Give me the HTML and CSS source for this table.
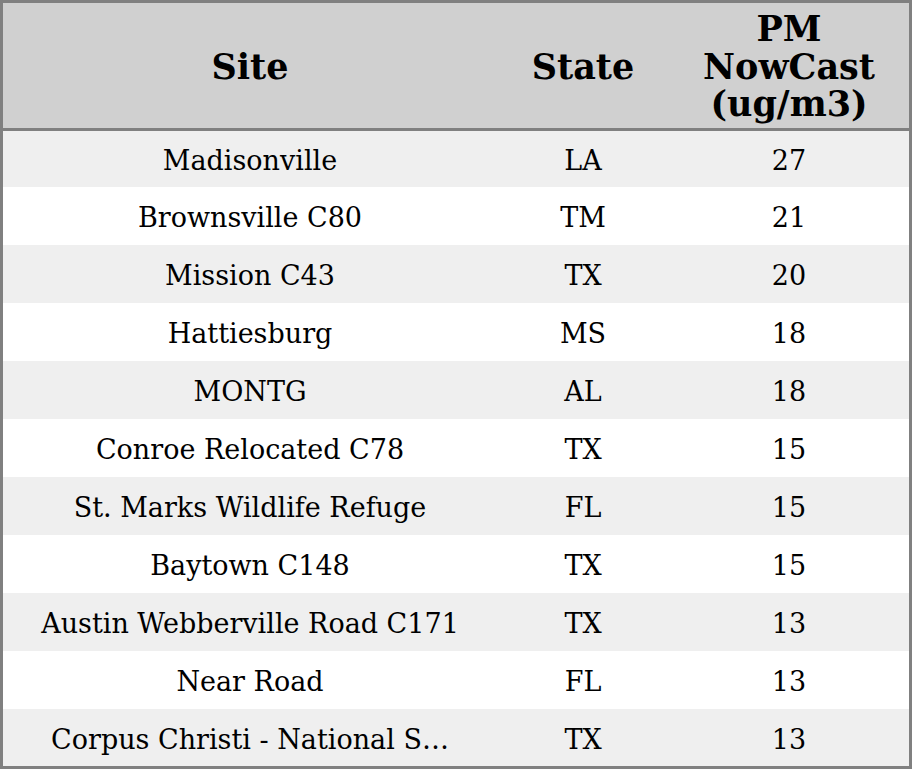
FILE: index.html
```html
<!DOCTYPE html>
<html>
<head>
<meta charset="utf-8">
<link rel="stylesheet" href="styles.css">
</head>
<body>
<div class="frame">
  <div class="row head">
    <div class="cell site">Site</div>
    <div class="cell state">State</div>
    <div class="cell pm">PM<br>NowCast<br>(ug/m3)</div>
  </div>
  <div class="body">
    <div class="row"><div class="cell site">Madisonville</div><div class="cell state">LA</div><div class="cell pm">27</div></div>
    <div class="row"><div class="cell site">Brownsville C80</div><div class="cell state">TM</div><div class="cell pm">21</div></div>
    <div class="row"><div class="cell site">Mission C43</div><div class="cell state">TX</div><div class="cell pm">20</div></div>
    <div class="row"><div class="cell site">Hattiesburg</div><div class="cell state">MS</div><div class="cell pm">18</div></div>
    <div class="row"><div class="cell site">MONTG</div><div class="cell state">AL</div><div class="cell pm">18</div></div>
    <div class="row"><div class="cell site">Conroe Relocated C78</div><div class="cell state">TX</div><div class="cell pm">15</div></div>
    <div class="row"><div class="cell site">St. Marks Wildlife Refuge</div><div class="cell state">FL</div><div class="cell pm">15</div></div>
    <div class="row"><div class="cell site">Baytown C148</div><div class="cell state">TX</div><div class="cell pm">15</div></div>
    <div class="row"><div class="cell site">Austin Webberville Road C171</div><div class="cell state">TX</div><div class="cell pm">13</div></div>
    <div class="row"><div class="cell site">Near Road</div><div class="cell state">FL</div><div class="cell pm">13</div></div>
    <div class="row"><div class="cell site">Corpus Christi - National S…</div><div class="cell state">TX</div><div class="cell pm">13</div></div>
  </div>
</div>
</body>
</html>
```
FILE: styles.css
```css
html, body {
  margin: 0;
  padding: 0;
  background: #ffffff;
}
.frame {
  box-sizing: border-box;
  width: 912px;
  height: 769px;
  border: 3px solid #808080;
  overflow: hidden;
  font-family: "DejaVu Serif", serif;
  color: #000;
}
.row {
  display: flex;
  height: 58px;
}
.head {
  height: 125px;
  background: #d0d0d0;
  border-bottom: 3px solid #808080;
  font-weight: bold;
  font-size: 35px;
  line-height: 37.5px;
}
.head .cell {
  padding-top: 2px;
}
.body .row {
  font-size: 27px;
}
.body .cell {
  padding-top: 2px;
}
.body .row:first-child {
  height: 56px;
}
.body .row:nth-child(odd) {
  background: #efefef;
}
.cell {
  display: flex;
  align-items: center;
  justify-content: center;
  text-align: center;
  white-space: nowrap;
  box-sizing: border-box;
}
.site {
  width: 494px;
}
.state {
  width: 172px;
}
.pm {
  flex: 1;
}
```
